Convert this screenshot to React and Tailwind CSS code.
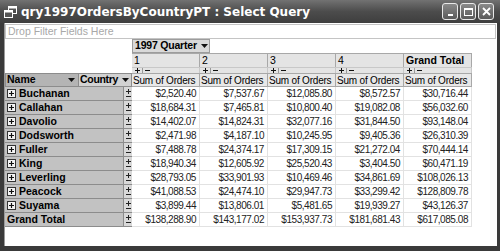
import React from 'react';

const cols = ['1', '2', '3', '4'];

const rows = [
  { name: 'Buchanan', vals: ['$2,520.40', '$7,537.67', '$12,085.80', '$8,572.57', '$30,716.44'] },
  { name: 'Callahan', vals: ['$18,684.31', '$7,465.81', '$10,800.40', '$19,082.08', '$56,032.60'] },
  { name: 'Davolio', vals: ['$14,402.07', '$14,824.31', '$32,077.16', '$31,844.50', '$93,148.04'] },
  { name: 'Dodsworth', vals: ['$2,471.98', '$4,187.10', '$10,245.95', '$9,405.36', '$26,310.39'] },
  { name: 'Fuller', vals: ['$7,488.78', '$24,374.17', '$17,309.15', '$21,272.04', '$70,444.14'] },
  { name: 'King', vals: ['$18,940.34', '$12,605.92', '$25,520.43', '$3,404.50', '$60,471.19'] },
  { name: 'Leverling', vals: ['$28,793.05', '$33,901.93', '$10,469.46', '$34,861.69', '$108,026.13'] },
  { name: 'Peacock', vals: ['$41,088.53', '$24,474.10', '$29,947.73', '$33,299.42', '$128,809.78'] },
  { name: 'Suyama', vals: ['$3,899.44', '$13,806.01', '$5,481.65', '$19,939.27', '$43,126.37'] },
];

const grand = ['$138,288.90', '$143,177.02', '$153,937.73', '$181,681.43', '$617,085.08'];

const Arrow = () => (
  <svg width="7" height="4" viewBox="0 0 7 4" className="shrink-0">
    <path d="M0 0h7L3.5 4z" fill="#111" />
  </svg>
);

// tiny "+ -" buttons under the column headers
const PlusMinus = () => (
  <div className="flex items-center gap-[2px] pl-[3px] h-full">
    <svg width="5" height="5" viewBox="0 0 5 5">
      <path d="M0 2.5h5M2.5 0v5" stroke="#111" strokeWidth="1" />
    </svg>
    <div className="w-px h-[5px] bg-[#999]" />
    <svg width="5" height="5" viewBox="0 0 5 5">
      <path d="M0 2.5h5" stroke="#111" strokeWidth="1" />
    </svg>
  </div>
);

// stacked +/- at the right of each row label
const RowPM = () => (
  <div className="w-[9px] h-full shrink-0 flex flex-col items-center justify-center gap-[1px] bg-[#d8d8d8] border-l border-[#8c8c8c]">
    <svg width="5" height="5" viewBox="0 0 5 5">
      <path d="M0 2.5h5M2.5 0v5" stroke="#222" strokeWidth="1" />
    </svg>
    <svg width="5" height="3" viewBox="0 0 5 3">
      <path d="M0 1.5h5" stroke="#222" strokeWidth="1" />
    </svg>
  </div>
);

const Expand = () => (
  <svg width="9" height="9" viewBox="0 0 9 9" className="shrink-0">
    <rect x="0.5" y="0.5" width="8" height="8" fill="#f4f4f4" stroke="#333" />
    <path d="M2 4.5h5M4.5 2v5" stroke="#111" strokeWidth="1.2" />
  </svg>
);

const RowLabel = ({ name, total }) => (
  <div className="flex shrink-0 h-[14px] w-[127px] border-b border-[#8c8c8c] bg-[#c2c2c2]">
    <div className="flex-1 flex items-center gap-[3px] pl-[2px] font-bold text-[10.5px] whitespace-nowrap text-black">
      {!total && <Expand />}
      <span>{name}</span>
    </div>
    <RowPM />
  </div>
);

const Cell = ({ v }) => (
  <div className="w-[68px] h-[14px] shrink-0 flex items-center justify-end pr-[3px] border-b border-r border-[#e2e2e2] text-[10px] tracking-[-0.45px] whitespace-nowrap text-[#222]">
    {v}
  </div>
);

export default function App() {
  return (
    <div
      className="w-[500px] h-[251px] bg-[#3a3a3a] flex flex-col overflow-hidden"
      style={{ fontFamily: '"Liberation Sans", Arial, sans-serif' }}
    >
      {/* title bar */}
      <div className="h-[23px] flex items-center px-[4px] bg-gradient-to-b from-[#727272] via-[#4c4c4c] to-[#3e3e3e] shrink-0">
        <svg width="13" height="12" viewBox="0 0 13 12" className="shrink-0 mr-[4px]">
          <rect x="4.5" y="0.5" width="8" height="7" fill="none" stroke="#fff" />
          <rect x="4.5" y="0.5" width="8" height="2" fill="#fff" />
          <rect x="0.5" y="4.5" width="8" height="7" fill="#555" stroke="#fff" />
          <rect x="0.5" y="4.5" width="8" height="2" fill="#fff" />
        </svg>
        <span className="text-white text-[12px] font-bold whitespace-nowrap" style={{ fontFamily: '"DejaVu Sans", sans-serif' }}>
          qry1997OrdersByCountryPT : Select Query
        </span>
        <div className="ml-auto flex gap-[2px] pr-[2px]">
          <div className="w-[16px] h-[17px] rounded-[3px] border border-[#e8e8e8] bg-gradient-to-b from-[#8a8a8a] to-[#5a5a5a] flex items-end justify-center pb-[3px]">
            <div className="w-[5px] h-[2px] bg-white" />
          </div>
          <div className="w-[16px] h-[17px] rounded-[3px] border border-[#e8e8e8] bg-gradient-to-b from-[#8a8a8a] to-[#5a5a5a] flex items-center justify-center">
            <div className="w-[9px] h-[8px] border border-white border-t-2" />
          </div>
          <div className="w-[16px] h-[17px] rounded-[3px] border border-[#e8e8e8] bg-gradient-to-b from-[#8a8a8a] to-[#5a5a5a] flex items-center justify-center">
            <svg width="9" height="9" viewBox="0 0 9 9">
              <path d="M1 1l7 7M8 1L1 8" stroke="#fff" strokeWidth="1.8" />
            </svg>
          </div>
        </div>
      </div>

      {/* client area */}
      <div className="flex-1 ml-[4px] mb-[5px] mr-[3px] bg-white border-l border-[#9a9a9a] flex flex-col">
        {/* drop filter box */}
        <div className="h-[15px] mt-[1px] mr-[1px] border border-[#c4c4c4] flex items-center pl-[2px] text-[10.5px] whitespace-nowrap text-[#a8a8a8]">
          Drop Filter Fields Here
        </div>

        {/* column field row */}
        <div className="flex h-[14px]">
          <div className="w-[127px] shrink-0" />
          <div className="w-[78px] shrink-0 flex items-center gap-[4px] pl-[2px] bg-[#d9d9d9] border border-[#9c9c9c] font-bold text-[10.5px] tracking-[-0.2px] whitespace-nowrap text-black">
            1997 Quarter
            <Arrow />
          </div>
        </div>

        {/* column items */}
        <div className="flex h-[14px]">
          <div className="w-[127px] shrink-0" />
          {cols.map((c) => (
            <div key={c} className="w-[68px] shrink-0 flex items-start pl-[2px] bg-[#e4e4e4] border-r border-t border-[#a8a8a8] text-[10.5px] leading-[13px] text-black">
              {c}
            </div>
          ))}
          <div className="w-[68px] shrink-0 flex items-start pl-[2px] bg-[#e4e4e4] border-r border-t border-[#a8a8a8] font-bold text-[10.5px] leading-[13px] whitespace-nowrap text-black">
            Grand Total
          </div>
        </div>
        <div className="flex h-[6px]">
          <div className="w-[127px] shrink-0" />
          {[0, 1, 2, 3, 4].map((i) => (
            <div key={i} className="w-[68px] shrink-0 bg-[#e4e4e4] border-r border-t border-[#c8c8c8]">
              <PlusMinus />
            </div>
          ))}
        </div>

        {/* row field header + data field captions */}
        <div className="flex h-[14px]">
          <div className="w-[74px] shrink-0 flex items-center justify-between pl-[1px] pr-[3px] bg-[#b4b4b4] border border-[#8c8c8c] font-bold text-[10.5px] whitespace-nowrap text-black">
            Name
            <Arrow />
          </div>
          <div className="w-[53px] shrink-0 flex items-center justify-between pl-[1px] pr-[2px] bg-[#d2d2d2] border-y border-r border-[#8c8c8c] font-bold text-[10.5px] tracking-[-0.3px] whitespace-nowrap overflow-hidden text-black">
            Country
            <Arrow />
          </div>
          {[0, 1, 2, 3, 4].map((i) => (
            <div key={i} className="w-[68px] shrink-0 flex items-center pl-[1px] bg-[#e8e8e8] border-r border-y border-[#a8a8a8] text-[10px] tracking-[-0.2px] whitespace-nowrap overflow-hidden text-black">
              Sum of Orders
            </div>
          ))}
        </div>

        {/* data rows */}
        {rows.map((r) => (
          <div key={r.name} className="flex">
            <RowLabel name={r.name} />
            {r.vals.map((v, i) => (
              <Cell key={i} v={v} />
            ))}
          </div>
        ))}
        <div className="flex">
          <RowLabel name="Grand Total" total />
          {grand.map((v, i) => (
            <Cell key={i} v={v} />
          ))}
        </div>
      </div>
    </div>
  );
}
